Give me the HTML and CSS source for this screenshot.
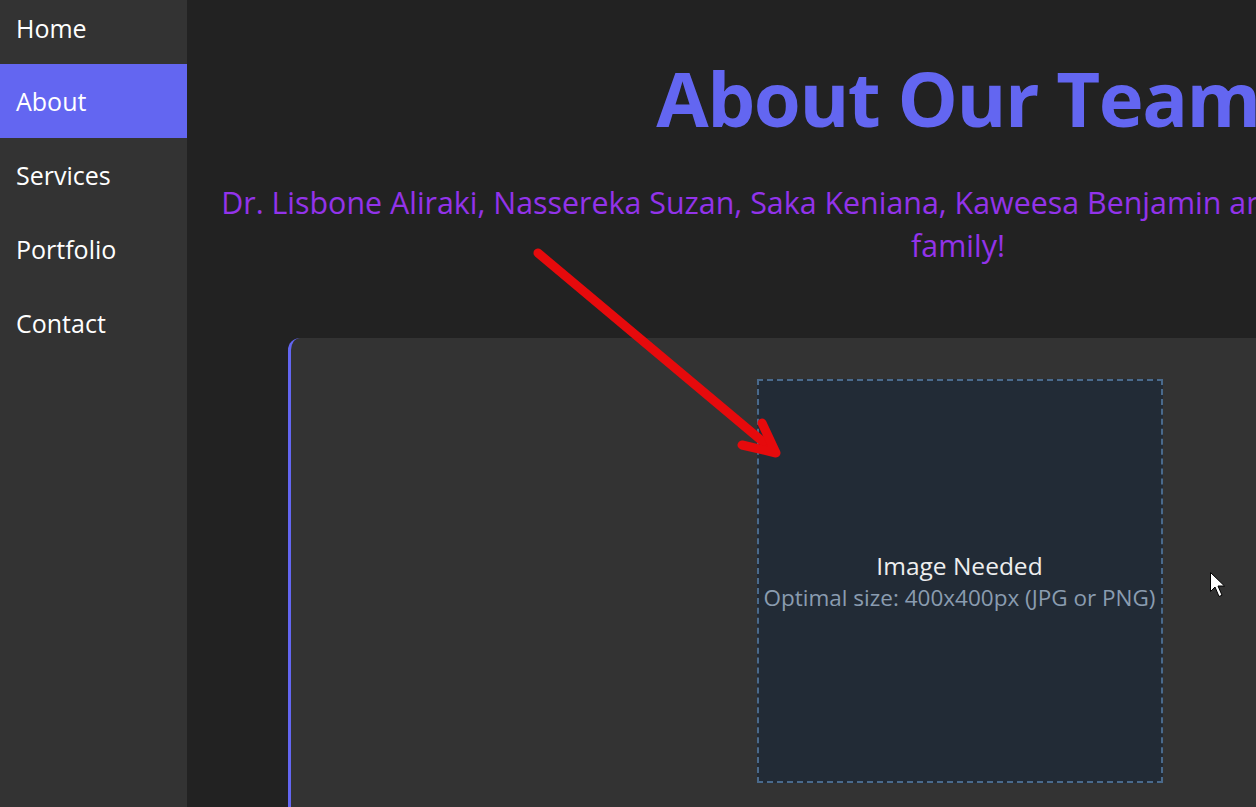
FILE: index.html
```html
<!DOCTYPE html>
<html lang="en">
<head>
<meta charset="utf-8">
<title>About Our Team</title>
<link rel="stylesheet" href="styles.css">
</head>
<body>
<aside class="sidebar">
  <nav class="nav">
    <a class="nav-item" href="#">Home</a>
    <a class="nav-item active" href="#">About</a>
    <a class="nav-item" href="#">Services</a>
    <a class="nav-item" href="#">Portfolio</a>
    <a class="nav-item" href="#">Contact</a>
  </nav>
</aside>
<main class="main">
  <header class="hero">
    <h1 class="title">About Our Team</h1>
    <p class="subtitle">Dr. Lisbone Aliraki, Nassereka Suzan, Saka Keniana, Kaweesa Benjamin and the entire Aliraki Foundation family!</p>
  </header>
  <section class="card">
    <div class="placeholder">
      <span class="ph-title">Image Needed</span>
      <span class="ph-note">Optimal size: 400x400px (JPG or PNG)</span>
    </div>
  </section>
</main>
<svg class="annot-arrow" width="1256" height="807" viewBox="0 0 1256 807" aria-hidden="true">
  <g stroke="#e60a0c" stroke-width="9" stroke-linecap="round" stroke-linejoin="round" fill="none">
    <line x1="538" y1="253" x2="774" y2="451"/>
    <polyline points="762,423 776,453 742,445"/>
  </g>
</svg>
<svg class="cursor" width="16" height="26" viewBox="0 0 16 26" aria-hidden="true">
  <path d="M0.5 0.5 L0.5 19.5 L5 15 L9 24.5 L12 23.2 L8 14 L14.5 14 Z" fill="#fff" stroke="#000" stroke-width="1"/>
</svg>
</body>
</html>
```

FILE: styles.css
```css
html, body {
  margin: 0;
  padding: 0;
  height: 100%;
}
body {
  display: flex;
  background: #222222;
  font-family: "Open Sans", "Noto Sans", sans-serif;
  overflow: hidden;
  width: 1256px;
  height: 807px;
  position: relative;
}
.sidebar {
  flex: 0 0 187px;
  width: 187px;
  background: #333333;
}
.nav {
  display: flex;
  flex-direction: column;
  margin-top: -9px;
}
.nav-item {
  display: flex;
  align-items: center;
  height: 74px;
  padding-left: 16px;
  color: #ffffff;
  text-decoration: none;
  font-size: 25px;
}
.nav-item:first-child {
  height: 73px;
}
.nav-item.active {
  background: #6366f1;
}
.main {
  flex: 0 0 1542px;
  width: 1542px;
  box-sizing: border-box;
  padding: 0 16px;
}
.hero {
  text-align: center;
}
.title {
  margin: 50px 0 0;
  font-size: 76px;
  line-height: 96px;
  letter-spacing: -1.5px;
  font-weight: 700;
  color: #6366f1;
}
.subtitle {
  margin: 35px auto 0;
  font-size: 30.4px;
  line-height: 43px;
  color: #9333ea;
}
.card {
  max-width: 1340px;
  margin: 71px auto 0;
  box-sizing: border-box;
  background: #333333;
  border-left: 3px solid #6366f1;
  border-radius: 12px;
  padding: 41px 0 60px;
}
.placeholder {
  width: 402px;
  height: 400px;
  margin: 0 auto;
  border: 2px dashed #4a6a8c;
  background: #222b36;
  display: flex;
  flex-direction: column;
  align-items: center;
  justify-content: center;
}
.ph-title {
  color: #eeeeee;
  font-size: 24.5px;
  line-height: 33px;
}
.ph-note {
  color: #8a9cb0;
  font-size: 22.5px;
  line-height: 32px;
}
.annot-arrow {
  position: absolute;
  left: 0;
  top: 0;
  pointer-events: none;
}
.cursor {
  position: absolute;
  left: 1210px;
  top: 572px;
  pointer-events: none;
}
```
